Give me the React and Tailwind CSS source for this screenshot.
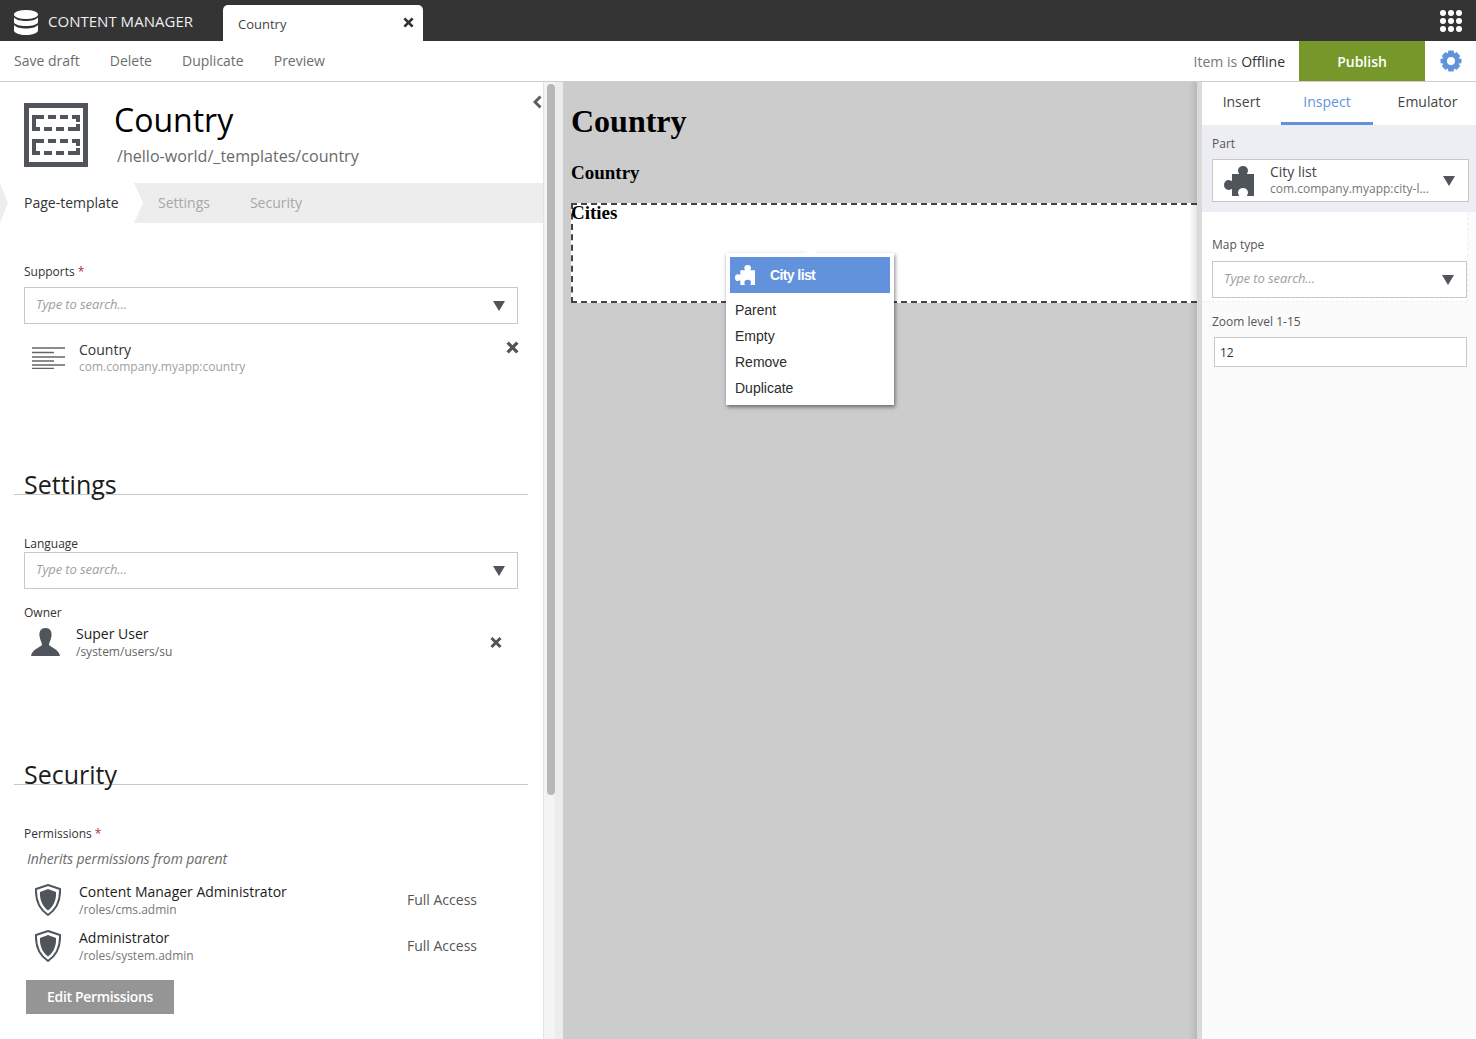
import React from "react";

const PUZZLE = "M8 8H15C15 7 14 6 14 4.5A5 4.5 0 0 1 24 4.5C24 6 23 7 23 8H30V30H23C23 29 24 28 24 26.5A5 4.5 0 0 0 14 26.5C14 28 15 29 15 30H8V23C7 23 6 24 4.5 24A4.5 5 0 0 1 4.5 14C6 14 7 15 8 15Z";

function Puzzle({ className, fill }) {
  return (
    <svg viewBox="0 0 30 30" className={className}>
      <path d={PUZZLE} fill={fill} />
    </svg>
  );
}

function Caret() {
  return (
    <svg viewBox="0 0 12 10" className="w-[12px] h-[10px] shrink-0">
      <path d="M0 0H12L6 10Z" fill="#50555c" />
    </svg>
  );
}

function Close({ className }) {
  return (
    <svg viewBox="0 0 12 12" className={className}>
      <path d="M1.5 1.5L10.5 10.5M10.5 1.5L1.5 10.5" stroke="currentColor" strokeWidth="3" fill="none" />
    </svg>
  );
}

function SearchBox({ className }) {
  return (
    <div className={`h-[37px] border border-[#c8c8c8] bg-white flex items-center justify-between pl-[11px] pr-[12px] ${className}`}>
      <span className="text-[13px] italic text-[#9e9e9e] tracking-[-0.1px] -mt-[2px]">Type to search...</span>
      <Caret />
    </div>
  );
}

function Shield() {
  return (
    <svg viewBox="0 0 26 32" className="w-[26px] h-[32px] shrink-0">
      <path d="M13 1L25 5C25.5 16 22 25 13 31C4 25 .5 16 1 5Z" fill="none" stroke="#50555c" strokeWidth="2" />
      <path d="M13 5L21 8C21.5 15 19 22 13 26.5C7 22 4.5 15 5 8Z" fill="#50555c" />
    </svg>
  );
}

function Role({ name, path, className }) {
  return (
    <div className={`h-[36px] flex items-center ${className}`}>
      <div className="w-[79px] pl-[35px] flex"><Shield /></div>
      <div className="w-[328px] self-start">
        <div className="text-[14px] leading-[20px] text-[#1c1c1c]">{name}</div>
        <div className="text-[12px] leading-[15px] text-[#777]">{path}</div>
      </div>
      <div className="text-[14px] text-[#555] -mt-[2px]">Full Access</div>
    </div>
  );
}

function Heading({ children, className }) {
  return (
    <div className={`ml-[14px] mr-[15px] pl-[10px] h-[25px] leading-[28px] text-[25px] text-[#1c1c1c] border-b border-[#c8c8c8] ${className}`}>
      {children}
    </div>
  );
}

function Label({ children, req, className }) {
  return (
    <div className={`h-[16px] leading-[16px] text-[12px] text-[#333] pl-[24px] ${className}`}>
      {children}
      {req && <span className="text-[#a33] ml-[3px]">*</span>}
    </div>
  );
}

function LeftPanel() {
  return (
    <div className="relative w-[543px] shrink-0 bg-white">
      <svg viewBox="0 0 9 14" className="absolute left-[533px] top-[13px] w-[9px] h-[14px]">
        <path d="M7.5 1.5L2 7L7.5 12.5" stroke="#5d5d5d" strokeWidth="3" fill="none" />
      </svg>
      <div className="pt-[21px] pl-[24px] flex h-[85px]">
        <svg viewBox="0 0 64 64" className="w-[64px] h-[64px] shrink-0">
          <rect x="2.5" y="2.5" width="59" height="59" fill="none" stroke="#50555c" strokeWidth="5" />
          <path d="M20 14H10V26H16M24 14H32M36 14H44M48 14H54V19M54 21V26H44M28 26H20M40 26H32M20 38H10V50H16M24 38H32M36 38H44M48 38H54V43M54 45V50H44M28 50H20M40 50H32" fill="none" stroke="#50555c" strokeWidth="4" />
        </svg>
        <div className="ml-[26px] -mt-[2px]">
          <div className="text-[32px] leading-[38px] text-black">Country</div>
          <div className="ml-[3px] mt-[6px] text-[16.1px] leading-[22px] text-[#6a6a6a]">/hello-world/_templates/country</div>
        </div>
      </div>
      <div className="mt-[16px] h-[40px] bg-[#ededed] flex items-center relative text-[14px]">
        <div className="relative h-full w-[144px] bg-white flex items-center pl-[24px] pb-[2px] text-[#333]">
          <div className="absolute left-0 top-0 border-y-[20px] border-y-transparent border-l-[8px] border-l-[#ededed]" />
          <div className="absolute left-[134px] top-0 h-full w-[10px] bg-[#ededed]" />
          <div className="absolute left-[134px] top-0 border-y-[20px] border-y-transparent border-l-[9px] border-l-white" />
          Page-template
        </div>
        <div className="ml-[14px] pb-[2px] text-[#a8a8a8]">Settings</div>
        <div className="ml-[40px] pb-[2px] text-[#a8a8a8]">Security</div>
      </div>

      <Label req className="mt-[40px] pt-px">Supports</Label>
      <SearchBox className="mt-[8px] ml-[24px] w-[494px]" />
      <div className="mt-[16px] h-[36px] flex items-center relative">
        <div className="w-[79px] pl-[32px]">
          <svg viewBox="0 0 33 22" className="w-[33px] h-[22px]">
            <path d="M0 1H33M0 5.5H22M0 10H33M0 14H22M0 18H33M0 21.5H22" stroke="#666" strokeWidth="1.6" />
          </svg>
        </div>
        <div>
          <div className="text-[14px] leading-[18px] text-[#333]">Country</div>
          <div className="text-[12px] leading-[16px] text-[#a0a0a0]">com.company.myapp:country</div>
        </div>
        <Close className="absolute left-[506px] top-[1px] w-[13px] h-[13px] text-[#50555c]" />
      </div>

      <Heading className="mt-[94px]">Settings</Heading>
      <Label className="mt-[41px]">Language</Label>
      <SearchBox className="ml-[24px] w-[494px]" />
      <Label className="mt-[15px] pt-px">Owner</Label>
      <div className="mt-[4px] h-[36px] flex items-center relative">
        <div className="w-[76px] pl-[31px]">
          <svg viewBox="0 0 29 28" className="w-[29px] h-[28px]">
            <path d="M14.5 0C19 0 21 3 20.5 8C20 12 18 15 18 16.5C18 19 28 20.5 29 28H0C1 20.5 11 19 11 16.5C11 15 9 12 8.5 8C8 3 10 0 14.5 0Z" fill="#50555c" />
          </svg>
        </div>
        <div className="self-start">
          <div className="text-[14px] leading-[20px] text-[#1c1c1c]">Super User</div>
          <div className="text-[12px] leading-[15px] text-[#666]">/system/users/su</div>
        </div>
        <Close className="absolute left-[490px] top-[12px] w-[12px] h-[13px] text-[#50555c]" />
      </div>

      <Heading className="mt-[100px]">Security</Heading>
      <Label req className="mt-[40px] pt-px">Permissions</Label>
      <div className="mt-[10px] h-[16px] leading-[16px] ml-[27px] text-[14px] italic text-[#6a6a6a] tracking-[-0.08px]">Inherits permissions from parent</div>
      <Role className="mt-[15px]" name="Content Manager Administrator" path="/roles/cms.admin" />
      <Role className="mt-[10px]" name="Administrator" path="/roles/system.admin" />
      <div className="mt-[16px] ml-[26px] w-[148px] h-[34px] bg-[#959595] text-white font-semibold text-[14px] flex items-center justify-center tracking-[-0.34px] pb-[2px]">Edit Permissions</div>
    </div>
  );
}

function Canvas() {
  return (
    <div className="relative flex-1 bg-[#cccccc] pl-[8px] text-black font-bold" style={{ fontFamily: '"Liberation Serif", serif' }}>
      <div className="pt-[21px] text-[32px] leading-[37px]">Country</div>
      <div className="mt-[22px] text-[19px] leading-[22px]">Country</div>
      <div className="mt-[19px] h-[100px] bg-white border-2 border-r-0 border-dashed border-[#444] text-[19px] leading-[15px]">
        <div className="-ml-[2px]">Cities</div>
      </div>
      <div className="absolute right-0 top-0 bottom-0 w-[8px] bg-linear-to-r from-transparent to-black/10" />
      <div className="absolute left-[163px] top-[171px] w-[168px] h-[152px] bg-white p-[4px] font-normal shadow-[1px_2px_4px_rgba(0,0,0,0.5)]" style={{ fontFamily: '"Liberation Sans", sans-serif' }}>
        <div className="absolute left-[79px] -top-[3px] w-0 h-0 border-x-[6px] border-x-transparent border-b-[3px] border-b-white" />
        <div className="h-[36px] bg-[#6392dd] flex items-center pl-[5px] text-white text-[14px] font-bold tracking-[-0.6px]">
          <Puzzle className="w-[20px] h-[20px]" fill="#fff" />
          <span className="ml-[15px]">City list</span>
        </div>
        <div className="mt-[4px] pl-[5px] text-[14px] leading-[26px] text-[#2c2c2c]">
          <div>Parent</div>
          <div>Empty</div>
          <div>Remove</div>
          <div>Duplicate</div>
        </div>
      </div>
    </div>
  );
}

function RightPanel() {
  return (
    <div className="w-[274px] shrink-0 bg-[#fbfbfb]">
      <div className="h-[43px] bg-white flex text-[14px]">
        <div className="w-[79px] flex items-center justify-center text-[#444] pb-[5px]">Insert</div>
        <div className="w-[92px] flex items-center justify-center text-[#6392dd] border-b-[3px] border-[#6392dd] pb-[2px]">Inspect</div>
        <div className="flex-1 flex items-center justify-center text-[#444] pb-[5px] pl-[6px]">Emulator</div>
      </div>
      <div className="h-[87px] bg-[#eceef3] pl-[10px] pr-[7px] pt-[11px]">
        <div className="h-[16px] leading-[16px] text-[12px] text-[#555]">Part</div>
        <div className="mt-[7px] h-[43px] border border-[#c8c8c8] bg-white flex items-center pl-[11px] pr-[13px]">
          <Puzzle className="w-[30px] h-[30px] shrink-0" fill="#50555c" />
          <div className="ml-[16px] flex-1 min-w-0 -mt-[2px]">
            <div className="text-[14px] leading-[18px] text-[#444]">City list</div>
            <div className="text-[12px] leading-[15px] text-[#777] truncate w-[159px]">com.company.myapp:city-l...</div>
          </div>
          <Caret />
        </div>
      </div>
      <div className="h-[90px] w-[266px] bg-white pl-[10px] border-b border-r border-dashed border-[#eeeeee] pt-[26px]">
        <div className="h-[16px] leading-[16px] text-[12px] text-[#555] -mt-[1px]">Map type</div>
        <SearchBox className="mt-[8px] w-[255px]" />
      </div>
      <div className="h-[16px] leading-[16px] text-[12px] text-[#555] mt-[12px] ml-[10px]">Zoom level 1-15</div>
      <div className="mt-[7px] ml-[12px] w-[253px] h-[30px] border border-[#c8c8c8] bg-white flex items-center pl-[5px] pt-[2px] text-[12px] text-[#333]">12</div>
    </div>
  );
}

export default function App() {
  return (
    <div className="w-full h-[1039px] overflow-hidden flex flex-col bg-white" style={{ fontFamily: '"Open Sans", sans-serif' }}>
      <header className="h-[41px] shrink-0 bg-[#343434] flex items-stretch pr-[14px]">
        <div className="w-[223px] flex items-center pl-[14px] pt-[3px] text-white">
          <svg viewBox="0 0 24 25" className="w-[24px] h-[25px] shrink-0">
            <ellipse cx="12" cy="4.5" rx="12" ry="4.5" fill="#fff" />
            <path d="M0 7.5C2 10 7 11 12 11S22 10 24 7.5V12C24 14.5 18 16 12 16S0 14.5 0 12Z" fill="#fff" />
            <path d="M0 15C2 17.5 7 18.5 12 18.5S22 17.5 24 15V20.5C24 23 18 25 12 25S0 23 0 20.5Z" fill="#fff" />
          </svg>
          <span className="ml-[10px] text-[15px] text-[#eee] leading-[20px] -mt-[2px] tracking-[0.02px]">CONTENT MANAGER</span>
        </div>
        <div className="mt-[5px] w-[200px] bg-white rounded-t-[5px] flex items-center justify-between pl-[15px] pr-[9px] text-[13px] text-[#444]">
          <span className="mt-[3px]">Country</span>
          <Close className="w-[11px] h-[11px] text-[#333] -mt-[2px]" />
        </div>
        <div className="ml-auto self-center grid grid-cols-3 gap-[2px]">
          {Array.from({ length: 9 }).map((_, i) => (
            <div key={i} className="w-[6px] h-[6px] rounded-full bg-white" />
          ))}
        </div>
      </header>

      <div className="h-[41px] shrink-0 border-b border-[#cfcfcf] flex items-stretch text-[14px] bg-white">
        <div className="flex items-center gap-[30px] pl-[14px] pb-[2px] text-[#6d6d6d]">
          <span>Save draft</span>
          <span>Delete</span>
          <span>Duplicate</span>
          <span>Preview</span>
        </div>
        <div className="ml-auto flex items-center pr-[14px] text-[#777] mt-px">
          Item is<span className="text-[#333] ml-[4px]">Offline</span>
        </div>
        <div className="w-[126px] bg-[#76982b] text-white font-semibold flex items-center justify-center">Publish</div>
        <div className="w-[51px] flex items-center justify-center">
          <svg viewBox="0 0 22 22" className="w-[22px] h-[22px]">
            <path fillRule="evenodd" fill="#6392dd" d="M8.5 0.5H13.5L14.3 3.4L16.6 2.1L20.2 5.9L18.6 8.2L21.5 9V13L18.6 13.8L20.2 16.1L16.6 19.9L14.3 18.6L13.5 21.5H8.5L7.7 18.6L5.4 19.9L1.8 16.1L3.4 13.8L0.5 13V9L3.4 8.2L1.8 5.9L5.4 2.1L7.7 3.4ZM11 7A4 4 0 1 0 11 15A4 4 0 1 0 11 7Z" />
          </svg>
        </div>
      </div>

      <main className="flex-1 flex min-h-0">
        <LeftPanel />
        <div className="w-[20px] shrink-0 flex border-l border-[#e4e4e4]">
          <div className="w-[11px] bg-[#f4f4f4] pl-[3px] pt-[2px]">
            <div className="w-[8px] h-[711px] rounded-[4px] bg-[#b8b8b8]" />
          </div>
          <div className="flex-1 bg-[#ececec]" />
        </div>
        <Canvas />
        <div className="w-[5px] shrink-0 bg-[#dadada]" />
        <RightPanel />
      </main>
    </div>
  );
}
